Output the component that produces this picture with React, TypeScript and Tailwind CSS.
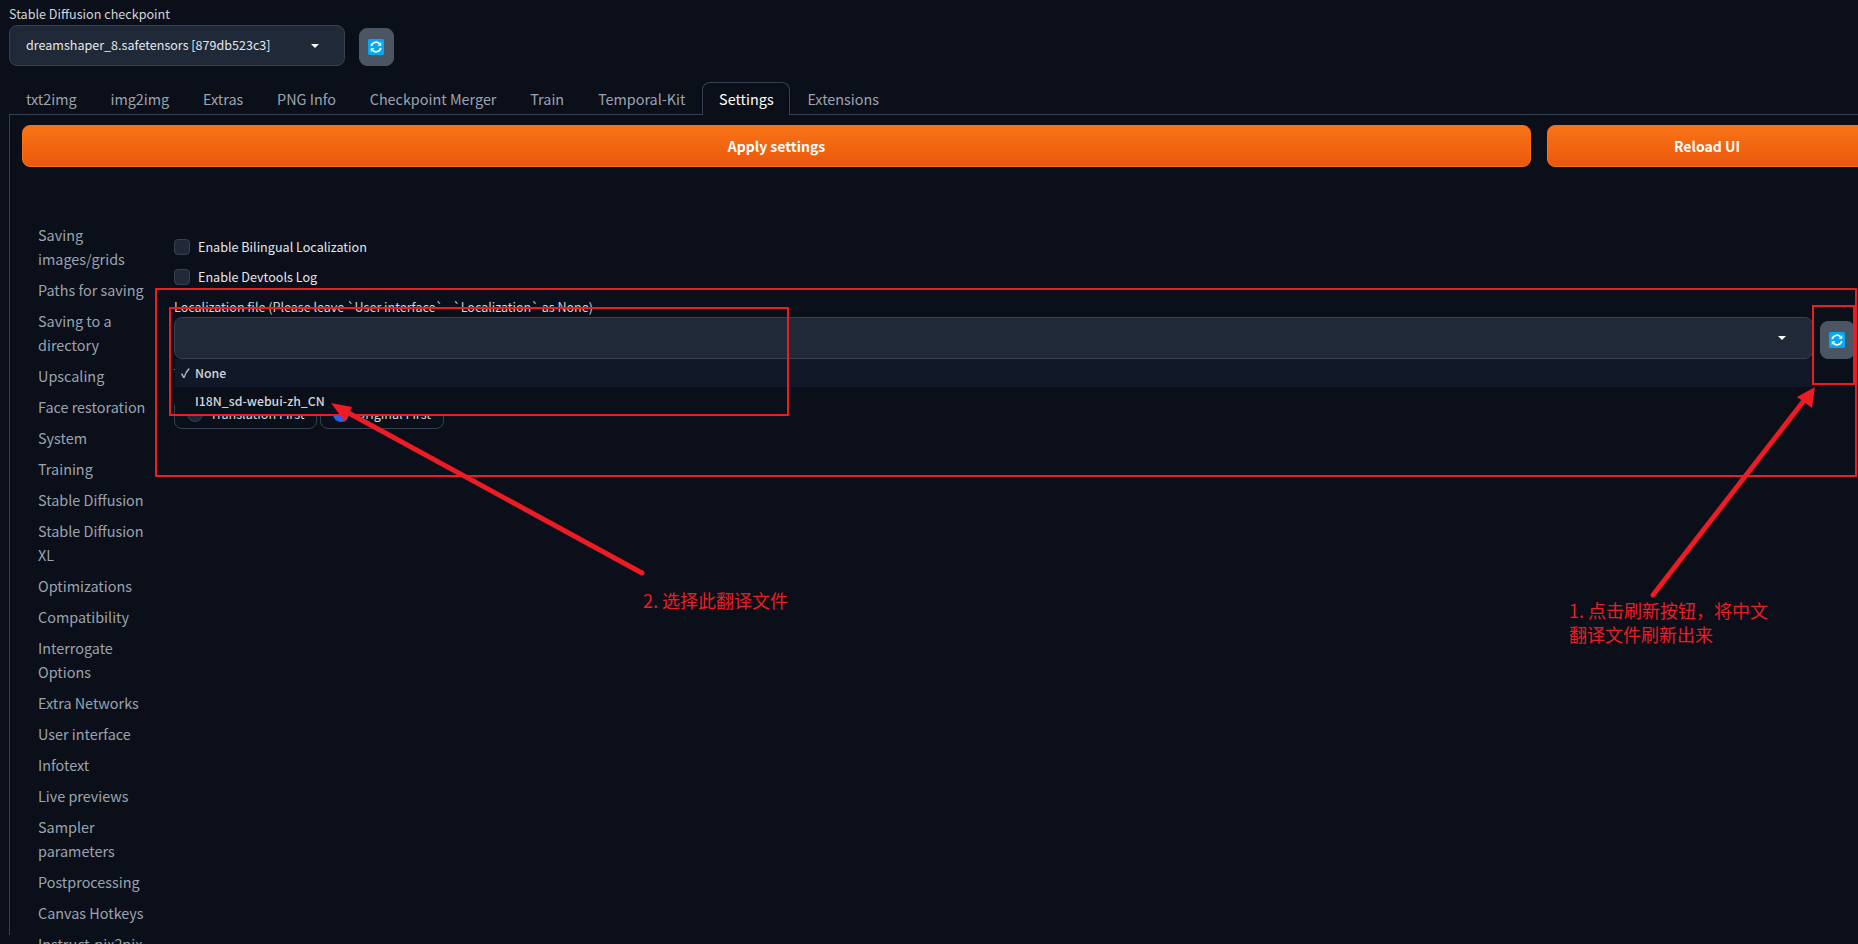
import React from "react";

const font = { fontFamily: '"Noto Sans CJK SC", "Noto Sans", sans-serif' };

function RefreshIcon() {
  return (
    <svg width="16" height="16" viewBox="0 0 16 16">
      <rect width="16" height="16" rx="1.5" fill="#03a9f4" />
      <path d="M3.2 7.2A4.9 4.9 0 0 1 11.4 4.6" fill="none" stroke="#fff" strokeWidth="1.7" />
      <path d="M9.6 6.8h3.7V3.1z" fill="#fff" />
      <path d="M12.8 8.8A4.9 4.9 0 0 1 4.6 11.4" fill="none" stroke="#fff" strokeWidth="1.7" />
      <path d="M6.4 9.2H2.7v3.7z" fill="#fff" />
    </svg>
  );
}

function Caret() {
  return <span className="w-0 h-0 border-l-[4px] border-r-[4px] border-t-[4px] border-l-transparent border-r-transparent border-t-white" />;
}

function RefreshButton() {
  return (
    <button className="w-[35px] h-[38px] shrink-0 rounded-lg bg-[#4b5563] border border-[#4b5563] flex items-center justify-center pr-px">
      <RefreshIcon />
    </button>
  );
}

const tabs = ["txt2img", "img2img", "Extras", "PNG Info", "Checkpoint Merger", "Train", "Temporal-Kit"];
const side = [
  ["Saving", "images/grids"],
  ["Paths for saving"],
  ["Saving to a", "directory"],
  ["Upscaling"],
  ["Face restoration"],
  ["System"],
  ["Training"],
  ["Stable Diffusion"],
  ["Stable Diffusion", "XL"],
  ["Optimizations"],
  ["Compatibility"],
  ["Interrogate", "Options"],
  ["Extra Networks"],
  ["User interface"],
  ["Infotext"],
  ["Live previews"],
  ["Sampler", "parameters"],
  ["Postprocessing"],
  ["Canvas Hotkeys"],
  ["Instruct-pix2pix"],
];

function Check({ label }: { label: string }) {
  return (
    <div className="flex items-center gap-2 h-[16px]">
      <span className="w-4 h-4 rounded-[4px] bg-[#1f2937] border border-[#374151]" />
      <span className="text-[12.6px] leading-4 text-[#e5e7eb]">{label}</span>
    </div>
  );
}

function Rect({ className }: { className: string }) {
  return <div className={`absolute z-20 border-2 border-[#ed1c24] ${className}`} />;
}

export default function App() {
  return (
    <div className="relative h-[944px] overflow-hidden bg-[#0b0f19] text-[#e5e7eb]" style={font}>
      <div className="pl-[9px]">
        <div className="pt-[5px] text-[12.6px] leading-[18px] text-[#d1d5db]">Stable Diffusion checkpoint</div>
        <div className="mt-[2px] flex items-start gap-[14px]">
          <div className="w-[336px] h-[41px] rounded-lg bg-[#1f2937] border border-[#374151] flex items-center justify-between pl-4 pr-[25px] text-[12.55px] text-[#e5e7eb]">
            <span>dreamshaper_8.safetensors [879db523c3]</span>
            <Caret />
          </div>
          <div className="pt-[3px]">
            <RefreshButton />
          </div>
        </div>

        <div className="mt-[16px] flex h-[33px] border-b border-[#374151] items-end">
          {tabs.map((t) => (
            <div key={t} className="px-[16.9px] h-[33px] leading-[35px] text-[14.4px] text-[#9ca3af] whitespace-nowrap">{t}</div>
          ))}
          <div className="relative -mb-px w-[88px] h-[33px] leading-[32px] text-center rounded-t-lg border border-b-0 border-[#374151] bg-[#0b0f19] text-[14.4px] text-white">Settings</div>
          <div className="px-[17px] h-[33px] leading-[35px] text-[14.4px] text-[#9ca3af]">Extensions</div>
        </div>

        <div className="border-l border-[#374151] h-[820px]">
          <div className="pt-[10px] pl-3 flex gap-[16px]">
            <button className="w-[1509px] h-[42px] shrink-0 rounded-lg border border-[#f97316] bg-gradient-to-b from-[#f97316] to-[#ea580c] text-[14px] font-semibold text-white">Apply settings</button>
            <button className="w-[320px] h-[42px] shrink-0 rounded-lg border border-[#f97316] bg-gradient-to-b from-[#f97316] to-[#ea580c] text-[14px] font-semibold text-white">Reload UI</button>
          </div>

          <div className="flex pt-[56px]">
            <ul className="w-[164px] shrink-0 pl-7 text-[14.4px] leading-6 text-[#9ca3af]">
              {side.map((lines, i) => (
                <li key={i} className="pb-[7px] whitespace-nowrap">
                  {lines.map((l) => (
                    <div key={l}>{l}</div>
                  ))}
                </li>
              ))}
            </ul>

            <div className="flex-1 min-w-0 pt-[16px]">
              <div className="flex flex-col gap-[14px]">
                <Check label="Enable Bilingual Localization" />
                <Check label="Enable Devtools Log" />
              </div>
              <div className="mt-[12px] text-[12.55px] leading-[20px] text-[#d1d5db]">Localization file (Please leave `User interface` - `Localization` as None)</div>
              <div className="flex items-start gap-[7px]">
                <div className="w-[1639px] h-[42px] rounded-lg bg-[#1f2937] border border-[#374151] flex items-center justify-end pr-[26px] shrink-0">
                  <Caret />
                </div>
                <div className="pt-[4px]">
                  <RefreshButton />
                </div>
              </div>
              <div className="relative">
                <div className="absolute left-px top-0 z-10 w-[1638px] rounded-b-lg bg-[#0b0f19] text-[12.3px] font-medium text-[#d1d5db]">
                  <div className="h-[28px] flex items-center bg-[#111827]">
                    <span className="w-[20px] pl-[6px]">✓</span>
                    <span>None</span>
                  </div>
                  <div className="h-[28px] flex items-center pl-[20px]">I18N_sd-webui-zh_CN</div>
                </div>
                <div className="pt-[5px] h-[40px] text-[12.6px] leading-[20px] text-[#d1d5db]">Translation display order</div>
                <div className="flex gap-[3px] whitespace-nowrap">
                  <div className="w-[143px] h-[30px] rounded-lg border border-[#374151] flex items-center pl-[12px] gap-[7px] text-[12.6px] text-[#d1d5db]">
                    <span className="w-4 h-4 rounded-full bg-[#1f2937] border border-[#374151]" />
                    <span className="pt-px">Translation First</span>
                  </div>
                  <div className="w-[124px] h-[30px] rounded-lg border border-[#374151] flex items-center pl-[12px] gap-[7px] text-[12.6px] text-[#d1d5db]">
                    <span className="w-4 h-4 rounded-full bg-[#2563eb]" />
                    <span className="pt-px">Original First</span>
                  </div>
                </div>
              </div>
            </div>
          </div>
        </div>
      </div>

      <Rect className="left-[155px] top-[288px] w-[1702px] h-[189px]" />
      <Rect className="left-[169px] top-[307px] w-[620px] h-[109px]" />
      <Rect className="left-[1812px] top-[305px] w-[43px] h-[80px]" />

      <svg className="absolute left-0 top-0 z-30 pointer-events-none" width="1858" height="944">
        <line x1="642" y1="573" x2="345" y2="411" stroke="#ed1c24" strokeWidth="5" strokeLinecap="round" />
        <polygon points="331,403 352,407 345,422" fill="#ed1c24" />
        <line x1="1653" y1="595" x2="1806" y2="398" stroke="#ed1c24" strokeWidth="5" strokeLinecap="round" />
        <polygon points="1815,387 1797,397 1812,408" fill="#ed1c24" />
      </svg>

      <div className="absolute z-30 left-[643px] top-[587px] text-[18px] leading-[26px] text-[#ed1c24] whitespace-nowrap">2. 选择此翻译文件</div>
      <div className="absolute z-30 left-[1569px] top-[598px] text-[18px] leading-[24px] text-[#ed1c24] whitespace-nowrap">
        1. 点击刷新按钮，将中文
        <br />
        翻译文件刷新出来
      </div>
    </div>
  );
}
